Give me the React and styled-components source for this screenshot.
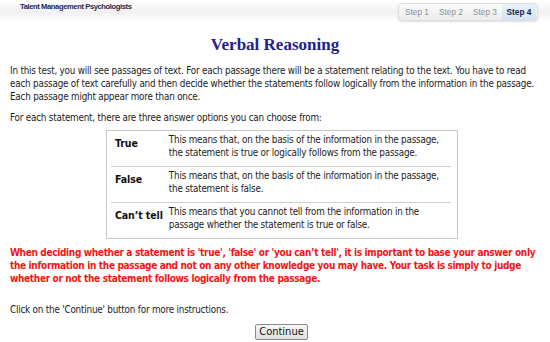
import React from 'react';
import styled, { createGlobalStyle } from 'styled-components';

const GlobalStyle = createGlobalStyle`
  html, body {
    margin: 0;
    padding: 0;
    background: #fff;
  }
  body {
    font-family: 'DejaVu Sans Condensed', Tahoma, 'DejaVu Sans', sans-serif;
    font-size: 9.8px;
    letter-spacing: -0.2px;
    color: #222;
  }
`;

const Page = styled.div`
  width: 550px;
  height: 342px;
  overflow: hidden;
`;

const Header = styled.header`
  height: 22px;
  display: flex;
  align-items: flex-start;
  justify-content: space-between;
  background: linear-gradient(to bottom, #ffffff 0%, #f1f1f1 55%, #fff 100%);
  padding: 0 12px 0 20px;
`;

const Logo = styled.div`
  font-family: 'Liberation Sans', Arial, sans-serif;
  font-size: 7.6px;
  font-weight: bold;
  color: #1c2a55;
  padding-top: 2px;
  letter-spacing: -0.4px;
`;

const Steps = styled.nav`
  margin-top: 3px;
  display: flex;
  align-items: stretch;
  height: 16px;
  padding: 0 1px;
  border: 1px solid #dcdcdc;
  border-radius: 4px;
  background: linear-gradient(to bottom, #fbfbfb, #ececec);
  box-shadow: 0 1px 2px rgba(0, 0, 0, 0.12);
`;

const Step = styled.span`
  font-family: 'Liberation Sans', Arial, sans-serif;
  font-size: 8.3px;
  letter-spacing: 0;
  display: flex;
  align-items: center;
  justify-content: center;
  width: 34px;
  color: ${p => (p.$active ? '#1b2340' : '#8a8f98')};
  font-weight: ${p => (p.$active ? 'bold' : 'normal')};
  background: ${p => (p.$active ? 'linear-gradient(to bottom, #e9f1fb, #d3e3f5)' : 'transparent')};
`;

const Content = styled.main`
  padding: 0 10px;
`;

const Title = styled.h1`
  font-family: 'Liberation Serif', 'Times New Roman', serif;
  font-size: 17px;
  letter-spacing: 0;
  font-weight: bold;
  color: #22228a;
  text-align: center;
  margin: 13px 0 9px;
`;

const Para = styled.p`
  margin: 0 0 ${p => p.$gap ?? 8}px;
  line-height: 13px;
  color: ${p => (p.$alert ? '#f51414' : '#222')};
  font-weight: ${p => (p.$alert ? 'bold' : 'normal')};
  font-size: ${p => (p.$alert ? '10px' : 'inherit')};
  letter-spacing: ${p => (p.$alert ? '-0.33px' : 'inherit')};
`;

const Options = styled.table`
  margin-left: 96px;
  width: 352px;
  border: 1px solid #c8c8c8;
  border-collapse: separate;
  border-spacing: 0;
  padding: 0 6px 0 4px;
`;

const Row = styled.tr`
  & + & td {
    border-top: 1px solid #cfcfcf;
  }
`;

const Label = styled.td`
  font-size: 10.5px;
  letter-spacing: -0.1px;
  font-weight: bold;
  color: #111;
  vertical-align: top;
  padding: 6px 4px 5px 4px;
  white-space: nowrap;
`;

const Desc = styled.td`
  vertical-align: top;
  line-height: 13px;
  padding: 2px 0 7px 2px;
`;

const Actions = styled.div`
  display: flex;
  justify-content: center;
  padding-left: 13px;
  margin-top: 4px;
`;

const Button = styled.button`
  font-family: 'DejaVu Sans Condensed', Tahoma, sans-serif;
  font-size: 11px;
  color: #111;
  height: 16px;
  padding: 0 3px;
  line-height: 12px;
  border: 1px solid #8a8a8a;
  border-radius: 2px;
  background: linear-gradient(to bottom, #f7f7f7, #dedede);
`;

const options = [
  {
    label: 'True',
    text: 'This means that, on the basis of the information in the passage, the statement is true or logically follows from the passage.',
  },
  {
    label: 'False',
    text: 'This means that, on the basis of the information in the passage, the statement is false.',
  },
  {
    label: 'Can\u2019t tell',
    text: 'This means that you cannot tell from the information in the passage whether the statement is true or false.',
  },
];

export default function App() {
  return (
    <Page>
      <GlobalStyle />
      <Header>
        <Logo>Talent Management Psychologists</Logo>
        <Steps>
          <Step>Step 1</Step>
          <Step>Step 2</Step>
          <Step>Step 3</Step>
          <Step $active>Step 4</Step>
        </Steps>
      </Header>
      <Content>
        <Title>Verbal Reasoning</Title>
        <Para>
          In this test, you will see passages of text. For each passage there will be a statement relating to the text. You have to read
          each passage of text carefully and then decide whether the statements follow logically from the information in the passage.
          Each passage might appear more than once.
        </Para>
        <Para $gap={6}>For each statement, there are three answer options you can choose from:</Para>
        <Options>
          <tbody>
            {options.map(o => (
              <Row key={o.label}>
                <Label>{o.label}</Label>
                <Desc>{o.text}</Desc>
              </Row>
            ))}
          </tbody>
        </Options>
        <Para $alert style={{ marginTop: 7 }}>
          When deciding whether a statement is 'true', 'false' or 'you can’t tell', it is important to base your answer only
          the information in the passage and not on any other knowledge you may have. Your task is simply to judge
          whether or not the statement follows logically from the passage.
        </Para>
        <Para style={{ marginTop: 18 }}>Click on the 'Continue' button for more instructions.</Para>
        <Actions>
          <Button>Continue</Button>
        </Actions>
      </Content>
    </Page>
  );
}
